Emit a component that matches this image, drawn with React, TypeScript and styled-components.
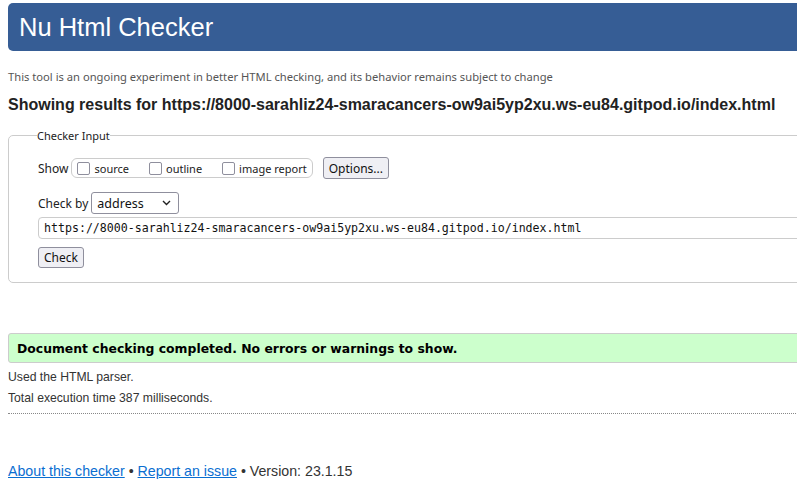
import React from "react";
import styled, { createGlobalStyle } from "styled-components";

const Global = createGlobalStyle`
  html, body { margin: 0; padding: 0; background: #fff; overflow: hidden; }
  body { font-family: "Liberation Sans", Arial, sans-serif; color: #222; }
`;

const Page = styled.div`
  width: 840px;
  padding: 3px 0 0 8px;
  display: flex;
  flex-direction: column;
`;

const Header = styled.h1`
  margin: 0;
  height: 48px;
  display: flex;
  align-items: center;
  padding-left: 11px;
  background: #365d95;
  border-radius: 5px;
  color: #fff;
  font-weight: normal;
  font-size: 25.5px;
  font-family: "Liberation Sans", Arial, sans-serif;
`;

const Intro = styled.p`
  margin: 19px 0 0;
  font-family: "Noto Sans", sans-serif;
  font-size: 11.2px;
  line-height: 14px;
  color: #555;
`;

const Heading = styled.h2`
  margin: 11px 0 0;
  font-size: 16px;
  line-height: 20px;
  font-weight: bold;
  color: #222;
  white-space: nowrap;
`;

const Fieldset = styled.fieldset`
  margin: 13px 0 0;
  border: 1px solid #ccc;
  border-radius: 5px;
  padding: 14px 0 14px 29px;
  font-family: "Noto Sans", sans-serif;
  font-size: 12px;
  color: #222;
  display: flex;
  flex-direction: column;
`;

const Legend = styled.legend`
  padding: 0;
  margin-left: -1px;
  font-size: 11px;
  line-height: 15px;
`;

const Row = styled.div<{ $mt?: number }>`
  display: flex;
  align-items: center;
  margin-top: ${(p) => p.$mt ?? 0}px;
`;

const Label = styled.span`
  margin-right: 3px;
`;

const Pill = styled.div`
  display: flex;
  align-items: center;
  height: 18px;
  border: 1px solid #ccc;
  border-radius: 6px;
  padding: 0 5px 0 5px;
  gap: 20px;
  font-size: 11px;
`;

const CheckItem = styled.label`
  display: flex;
  align-items: center;
  gap: 4px;
`;

const Box = styled.span`
  width: 11px;
  height: 11px;
  border: 1px solid #8f8f9d;
  border-radius: 2px;
  background: #fff;
`;

const Button = styled.button<{ $ml?: number }>`
  font-family: "Noto Sans", sans-serif;
  font-size: 12px;
  color: #111;
  height: ${(p) => (p.$ml ? 22 : 21)}px;
  margin-left: ${(p) => p.$ml ?? 0}px;
  padding: 0 5px;
  background: #efeff4;
  border: 1px solid #8f8f9d;
  border-radius: 3px;
`;

const Select = styled.div`
  display: flex;
  align-items: center;
  justify-content: space-between;
  width: 88px;
  height: 22px;
  box-sizing: border-box;
  padding: 0 7px 0 5px;
  border: 1px solid #8f8f9d;
  border-radius: 3px;
  background: #fff;
  font-size: 12.5px;
  color: #111;
`;

const UrlInput = styled.div`
  height: 22px;
  box-sizing: border-box;
  display: flex;
  align-items: center;
  padding-left: 5px;
  border: 1px solid #ccc;
  border-radius: 4px;
  font-family: "DejaVu Sans Mono", monospace;
  font-size: 11.6px;
  color: #111;
  margin-top: 3px;
`;

const Success = styled.p`
  margin: 50px 0 0;
  height: 28px;
  display: flex;
  align-items: center;
  padding-left: 8px;
  background: #ccffcc;
  border: 1px solid #ccc;
  border-radius: 3px;
  font-family: "DejaVu Sans", sans-serif;
  font-weight: bold;
  font-size: 12.4px;
  color: #000;
`;

const Info = styled.p<{ $mt: number }>`
  margin: ${(p) => p.$mt}px 0 0;
  font-size: 12.2px;
  line-height: 14px;
  color: #333;
`;

const Rule = styled.hr`
  margin: 8px 0 0;
  border: 0;
  border-top: 1px dotted #888;
  height: 0;
`;

const Footer = styled.p`
  margin: 49px 0 0;
  font-size: 14.2px;
  line-height: 16px;
  color: #333;
`;

const Link = styled.a`
  color: #0a6ed1;
  text-decoration: underline;
`;

export default function App() {
  return (
    <>
      <Global />
      <Page>
        <Header>Nu Html Checker</Header>
        <Intro>
          This tool is an ongoing experiment in better HTML checking, and its behavior remains subject to change
        </Intro>
        <Heading>
          Showing results for https://8000-sarahliz24-smaracancers-ow9ai5yp2xu.ws-eu84.gitpod.io/index.html
        </Heading>
        <Fieldset>
          <Legend>Checker Input</Legend>
          <Row>
            <Label>Show</Label>
            <Pill>
              <CheckItem>
                <Box />
                source
              </CheckItem>
              <CheckItem>
                <Box />
                outline
              </CheckItem>
              <CheckItem>
                <Box />
                image report
              </CheckItem>
            </Pill>
            <Button $ml={10}>Options...</Button>
          </Row>
          <Row $mt={13}>
            <Label>Check by</Label>
            <Select>
              address
              <svg width="9" height="6" viewBox="0 0 9 6">
                <path d="M1 1l3.5 3.5L8 1" fill="none" stroke="#222" strokeWidth="1.4" />
              </svg>
            </Select>
          </Row>
          <UrlInput>https://8000-sarahliz24-smaracancers-ow9ai5yp2xu.ws-eu84.gitpod.io/index.html</UrlInput>
          <Row $mt={8}>
            <Button>Check</Button>
          </Row>
        </Fieldset>
        <Success>Document checking completed. No errors or warnings to show.</Success>
        <Info $mt={7}>Used the HTML parser.</Info>
        <Info $mt={7}>Total execution time 387 milliseconds.</Info>
        <Rule />
        <Footer>
          <Link href="#">About this checker</Link> • <Link href="#">Report an issue</Link> • Version: 23.1.15
        </Footer>
      </Page>
    </>
  );
}
